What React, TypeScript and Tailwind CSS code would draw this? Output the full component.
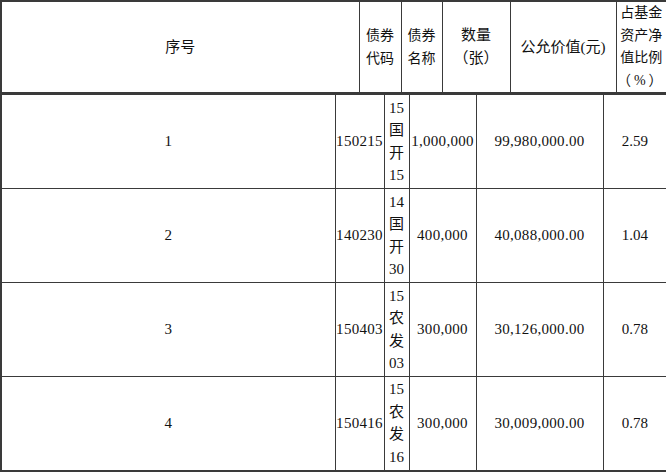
import React from "react";

type Row = {
  no: string;
  code: string;
  name: string[];
  qty: string;
  value: string;
  pct: string;
};

const rows: Row[] = [
  { no: "1", code: "150215", name: ["15", "国", "开", "15"], qty: "1,000,000", value: "99,980,000.00", pct: "2.59" },
  { no: "2", code: "140230", name: ["14", "国", "开", "30"], qty: "400,000", value: "40,088,000.00", pct: "1.04" },
  { no: "3", code: "150403", name: ["15", "农", "发", "03"], qty: "300,000", value: "30,126,000.00", pct: "0.78" },
  { no: "4", code: "150416", name: ["15", "农", "发", "16"], qty: "300,000", value: "30,009,000.00", pct: "0.78" },
];

const font = {
  fontFamily: '"Liberation Serif", "Noto Sans CJK SC", serif',
};

export default function App() {
  const th = "border border-[#3a3a3a] p-0 text-center align-middle font-normal";
  const td = "border border-[#3a3a3a] p-0 text-center align-middle";

  return (
    <div className="w-[666px] bg-white text-[15px] leading-[23px] text-[#111]" style={font}>
      {/* header table */}
      <table className="w-[666px] table-fixed border-collapse border-2 border-[#3a3a3a]">
        <colgroup>
          <col className="w-[358px]" />
          <col className="w-[42px]" />
          <col className="w-[41px]" />
          <col className="w-[68px]" />
          <col className="w-[106px]" />
          <col className="w-[51px]" />
        </colgroup>
        <thead>
          <tr className="h-[92px]">
            <th className={th}>序号</th>
            <th className={`${th} text-[14px]`}>
              债券<br />代码
            </th>
            <th className={`${th} text-[14px]`}>
              债券<br />名称
            </th>
            <th className={th}>
              数量<br />（张）
            </th>
            <th className={th}>公允价值(元)</th>
            <th className={`${th} text-[14px] leading-[22.5px]`}>
              占基金<br />资产净<br />值比例<br />
              <span className="tracking-[3px]">（%）</span>
            </th>
          </tr>
        </thead>
      </table>

      {/* body table */}
      <table className="w-[666px] table-fixed border-collapse border-2 border-t-0 border-[#3a3a3a]">
        <colgroup>
          <col className="w-[334px]" />
          <col className="w-[49px]" />
          <col className="w-[25px]" />
          <col className="w-[67px]" />
          <col className="w-[127px]" />
          <col className="w-[64px]" />
        </colgroup>
        <tbody>
          {rows.map((r) => (
            <tr key={r.no} className="h-[94px]">
              <td className={td}>{r.no}</td>
              <td className={`${td} tracking-[0.3px]`}>{r.code}</td>
              <td className={`${td} leading-[22.5px]`}>
                {r.name.map((n, i) => (
                  <div key={i}>{n}</div>
                ))}
              </td>
              <td className={`${td} tracking-[0.3px]`}>{r.qty}</td>
              <td className={`${td} tracking-[0.3px]`}>{r.value}</td>
              <td className={td}>{r.pct}</td>
            </tr>
          ))}
        </tbody>
      </table>
    </div>
  );
}
